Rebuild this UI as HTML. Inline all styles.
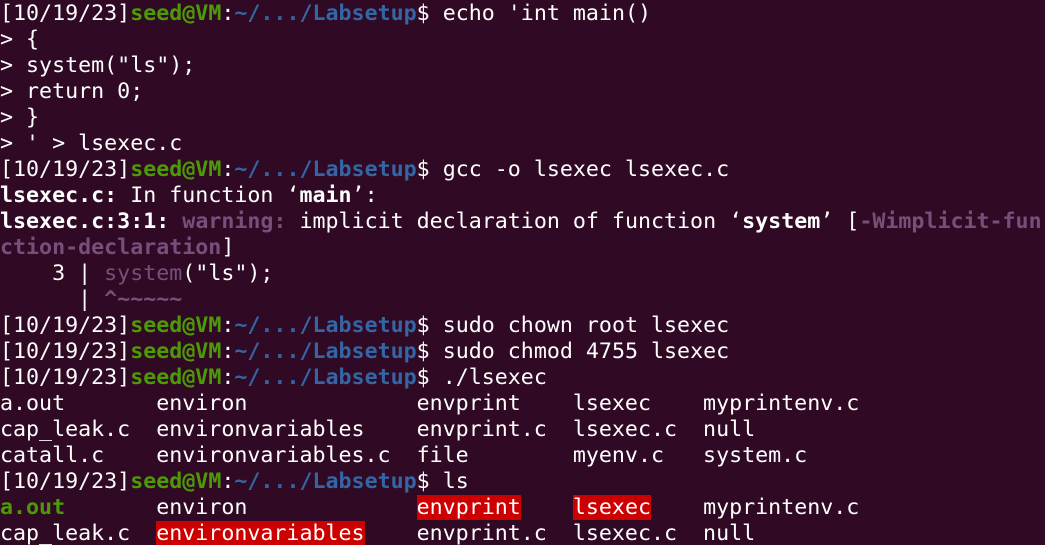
<!DOCTYPE html>
<html><head><meta charset="utf-8"><style>
html,body{margin:0;padding:0;background:#300a24;width:1045px;height:545px;overflow:hidden}
pre{margin:0;padding:1px 0 0 0;font-family:"DejaVu Sans Mono","Liberation Mono",monospace;font-size:21.63px;line-height:26px;color:#ffffff;white-space:pre}
.g{color:#4e9a06;font-weight:bold}
.b{color:#3465a4;font-weight:bold}
.w{color:#75507b;font-weight:bold}
.p{color:#75507b}
.bo{font-weight:bold}
.r{background:#cc0000}
</style></head><body><pre>[10/19/23]<span class="g">seed@VM</span>:<span class="b">~/.../Labsetup</span>$ echo 'int main()
&gt; {
&gt; system("ls");
&gt; return 0;
&gt; }
&gt; ' &gt; lsexec.c
[10/19/23]<span class="g">seed@VM</span>:<span class="b">~/.../Labsetup</span>$ gcc -o lsexec lsexec.c
<span class="bo">lsexec.c:</span> In function ‘<span class="bo">main</span>’:
<span class="bo">lsexec.c:3:1:</span> <span class="w">warning:</span> implicit declaration of function ‘<span class="bo">system</span>’ [<span class="w">-Wimplicit-fun</span>
<span class="w">ction-declaration</span>]
    3 | <span class="p">system</span>("ls");
      | <span class="w">^~~~~~</span>
[10/19/23]<span class="g">seed@VM</span>:<span class="b">~/.../Labsetup</span>$ sudo chown root lsexec
[10/19/23]<span class="g">seed@VM</span>:<span class="b">~/.../Labsetup</span>$ sudo chmod 4755 lsexec
[10/19/23]<span class="g">seed@VM</span>:<span class="b">~/.../Labsetup</span>$ ./lsexec
a.out       environ             envprint    lsexec    myprintenv.c
cap_leak.c  environvariables    envprint.c  lsexec.c  null
catall.c    environvariables.c  file        myenv.c   system.c
[10/19/23]<span class="g">seed@VM</span>:<span class="b">~/.../Labsetup</span>$ ls
<span class="g">a.out</span>       environ             <span class="r">envprint</span>    <span class="r">lsexec</span>    myprintenv.c
cap_leak.c  <span class="r">environvariables</span>    envprint.c  lsexec.c  null
</pre></body></html>
